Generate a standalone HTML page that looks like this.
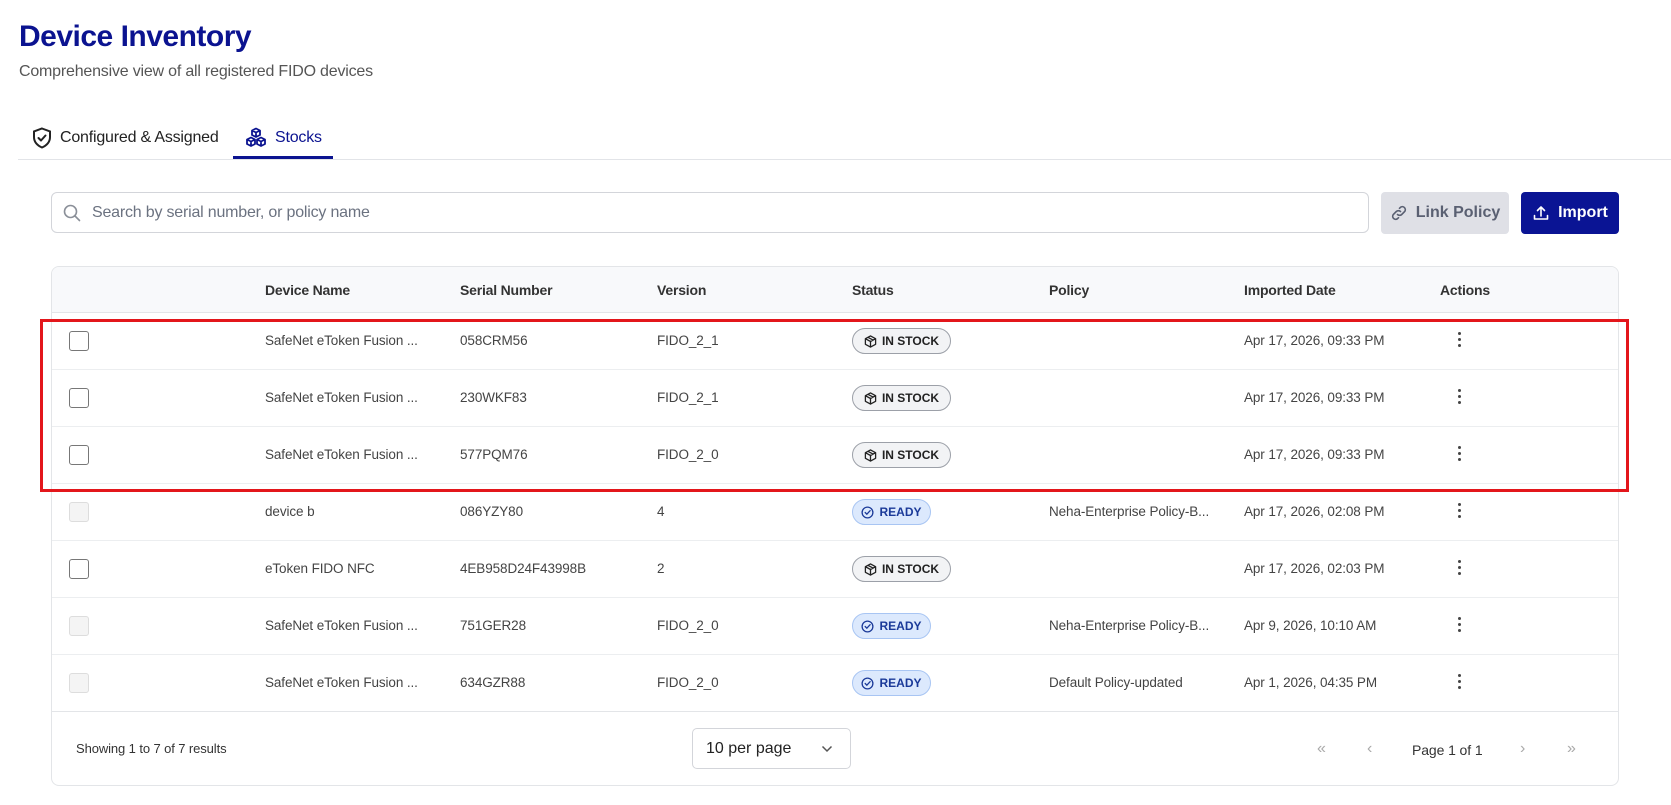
<!DOCTYPE html>
<html><head><meta charset="utf-8"><style>
*{box-sizing:border-box;margin:0;padding:0}
body{width:1671px;height:805px;background:#fff;font-family:"Liberation Sans",Arial,sans-serif;color:#333;position:relative;overflow:hidden}
.abs{position:absolute}
h1{position:absolute;left:19px;top:20px;font-size:30px;font-weight:bold;color:#0b1390;letter-spacing:-0.5px}
.sub{left:19px;top:63px;font-size:16px;color:#555;letter-spacing:-0.2px}
.tab{top:127px;font-size:16px;display:flex;align-items:center;gap:8px;color:#222;letter-spacing:-0.2px}
.search{left:51px;top:192px;width:1318px;height:41px;border:1px solid #d3d5da;border-radius:6px}
.search span{position:absolute;left:40px;top:11px;font-size:16px;color:#6b7280;letter-spacing:-0.2px}
.btn{top:192px;height:42px;border-radius:4px;display:flex;align-items:center;justify-content:center;gap:8px;font-size:16px;font-weight:bold}
.table{left:51px;top:266px;width:1568px;height:520px;border:1px solid #e3e5e8;border-radius:8px;overflow:hidden}
.head{position:absolute;left:0;top:0;width:100%;height:46px;background:#f8f9fb;border-bottom:1px solid #e3e5e8}
.hc{position:absolute;top:15px;font-size:14px;font-weight:bold;color:#333;letter-spacing:-0.2px}
.row{position:absolute;left:0;width:100%;height:57px;border-bottom:1px solid #eceef0}
.c{position:absolute;top:20px;font-size:13.5px;color:#444;white-space:nowrap;letter-spacing:-0.1px}
.cb{position:absolute;left:17px;top:18px;width:20px;height:20px;border:1.5px solid #777;border-radius:3px;background:#fff}
.cb.d{border:1px solid #ddd;background:#f4f4f4}
.badge{position:absolute;left:800px;top:15px;height:26px;border-radius:13px;display:flex;align-items:center;justify-content:center;gap:5px;font-size:12px;font-weight:bold;white-space:nowrap}
.stock{background:#f2f3f5;border:1.5px solid #9ca0a8;color:#222;width:99px}
.ready{background:#dce9fd;border:1.5px solid #a8c5f3;color:#1b3a99;width:79px}
.dots{position:absolute;left:1406px;top:19px;width:4px}
.dots i{display:block;width:3px;height:3px;background:#444;border-radius:50%;margin-bottom:3px}
</style></head><body>
<h1>Device Inventory</h1>
<div class="abs sub">Comprehensive view of all registered FIDO devices</div>
<div class="abs tab" style="left:32px"><svg width="20" height="22" viewBox="0 0 20 22" fill="none" stroke="#222" stroke-width="2"><path d="M10 1.5 L18 4.5 V10 C18 15 14.5 18.5 10 20.5 C5.5 18.5 2 15 2 10 V4.5 Z"/><path d="M6.5 11 L9 13.5 L13.5 8.5" stroke-linecap="round" stroke-linejoin="round"/></svg>Configured &amp; Assigned</div>
<div class="abs tab" style="left:245px;color:#0b1390"><svg width="22" height="22" viewBox="0 0 22 22" fill="none" stroke="#0b1390" stroke-width="1.8" stroke-linejoin="round"><path d="M11 1.5 L15 3.5 V8 L11 10 L7 8 V3.5Z M7 3.5 L11 5.5 L15 3.5 M11 5.5V10"/><path d="M6 10.5 L10 12.5 V17 L6 19 L2 17 V12.5Z M2 12.5 L6 14.5 L10 12.5 M6 14.5V19"/><path d="M16 10.5 L20 12.5 V17 L16 19 L12 17 V12.5Z M12 12.5 L16 14.5 L20 12.5 M16 14.5V19"/></svg>Stocks</div>
<div class="abs" style="left:233px;top:156px;width:100px;height:3px;background:#0b1390"></div>
<div class="abs" style="left:18px;top:159px;width:1653px;height:1px;background:#e2e4e8"></div>
<div class="abs search"><svg class="abs" style="left:11px;top:11px" width="18" height="18" viewBox="0 0 18 18" fill="none" stroke="#8a8f98" stroke-width="1.6"><circle cx="7.5" cy="7.5" r="6"/><path d="M12 12 L16.5 16.5" stroke-linecap="round"/></svg><span>Search by serial number, or policy name</span></div>
<div class="abs btn" style="left:1381px;width:128px;background:#dfe0e6;color:#5a6072"><svg width="18" height="18" viewBox="0 0 18 18" fill="none" stroke="#5a6072" stroke-width="1.6" stroke-linecap="round"><path d="M7.5 10.5 a3 3 0 0 0 4.2 0 l3-3 a3 3 0 0 0-4.2-4.2 l-1 1"/><path d="M10.5 7.5 a3 3 0 0 0-4.2 0 l-3 3 a3 3 0 0 0 4.2 4.2 l1-1"/></svg>Link Policy</div>
<div class="abs btn" style="left:1521px;width:98px;background:#0a1494;color:#fff"><svg width="18" height="18" viewBox="0 0 18 18" fill="none" stroke="#fff" stroke-width="1.6" stroke-linecap="round" stroke-linejoin="round"><path d="M9 12V3 M5.5 6.5 L9 3 L12.5 6.5 M2.5 11.5V15H15.5V11.5"/></svg>Import</div>

<div class="abs table">
<div class="head"><div class="hc" style="left:213px">Device Name</div><div class="hc" style="left:408px">Serial Number</div><div class="hc" style="left:605px">Version</div><div class="hc" style="left:800px">Status</div><div class="hc" style="left:997px">Policy</div><div class="hc" style="left:1192px">Imported Date</div><div class="hc" style="left:1388px">Actions</div></div>

<div class="row" style="top:46px"><div class="cb"></div><div class="c" style="left:213px">SafeNet eToken Fusion ...</div><div class="c" style="left:408px">058CRM56</div><div class="c" style="left:605px">FIDO_2_1</div><div class="badge stock"><svg width="13" height="13" viewBox="0 0 14 14" fill="none" stroke="#222" stroke-width="1.4" stroke-linejoin="round"><path d="M7 1 L12.5 4 V10 L7 13 L1.5 10 V4Z M1.5 4 L7 7 L12.5 4 M7 7V13 M4.2 2.5 L9.8 5.5"/></svg>IN STOCK</div><div class="c" style="left:1192px">Apr 17, 2026, 09:33 PM</div><div class="dots"><i></i><i></i><i></i></div></div>
<div class="row" style="top:103px"><div class="cb"></div><div class="c" style="left:213px">SafeNet eToken Fusion ...</div><div class="c" style="left:408px">230WKF83</div><div class="c" style="left:605px">FIDO_2_1</div><div class="badge stock"><svg width="13" height="13" viewBox="0 0 14 14" fill="none" stroke="#222" stroke-width="1.4" stroke-linejoin="round"><path d="M7 1 L12.5 4 V10 L7 13 L1.5 10 V4Z M1.5 4 L7 7 L12.5 4 M7 7V13 M4.2 2.5 L9.8 5.5"/></svg>IN STOCK</div><div class="c" style="left:1192px">Apr 17, 2026, 09:33 PM</div><div class="dots"><i></i><i></i><i></i></div></div>
<div class="row" style="top:160px"><div class="cb"></div><div class="c" style="left:213px">SafeNet eToken Fusion ...</div><div class="c" style="left:408px">577PQM76</div><div class="c" style="left:605px">FIDO_2_0</div><div class="badge stock"><svg width="13" height="13" viewBox="0 0 14 14" fill="none" stroke="#222" stroke-width="1.4" stroke-linejoin="round"><path d="M7 1 L12.5 4 V10 L7 13 L1.5 10 V4Z M1.5 4 L7 7 L12.5 4 M7 7V13 M4.2 2.5 L9.8 5.5"/></svg>IN STOCK</div><div class="c" style="left:1192px">Apr 17, 2026, 09:33 PM</div><div class="dots"><i></i><i></i><i></i></div></div>
<div class="row" style="top:217px"><div class="cb d"></div><div class="c" style="left:213px">device b</div><div class="c" style="left:408px">086YZY80</div><div class="c" style="left:605px">4</div><div class="badge ready"><svg width="13" height="13" viewBox="0 0 14 14" fill="none" stroke="#1b3a99" stroke-width="1.4" stroke-linecap="round"><circle cx="7" cy="7" r="5.8"/><path d="M4.5 7 L6.3 8.8 L9.8 5"/></svg>READY</div><div class="c" style="left:997px">Neha-Enterprise Policy-B...</div><div class="c" style="left:1192px">Apr 17, 2026, 02:08 PM</div><div class="dots"><i></i><i></i><i></i></div></div>
<div class="row" style="top:274px"><div class="cb"></div><div class="c" style="left:213px">eToken FIDO NFC</div><div class="c" style="left:408px">4EB958D24F43998B</div><div class="c" style="left:605px">2</div><div class="badge stock"><svg width="13" height="13" viewBox="0 0 14 14" fill="none" stroke="#222" stroke-width="1.4" stroke-linejoin="round"><path d="M7 1 L12.5 4 V10 L7 13 L1.5 10 V4Z M1.5 4 L7 7 L12.5 4 M7 7V13 M4.2 2.5 L9.8 5.5"/></svg>IN STOCK</div><div class="c" style="left:1192px">Apr 17, 2026, 02:03 PM</div><div class="dots"><i></i><i></i><i></i></div></div>
<div class="row" style="top:331px"><div class="cb d"></div><div class="c" style="left:213px">SafeNet eToken Fusion ...</div><div class="c" style="left:408px">751GER28</div><div class="c" style="left:605px">FIDO_2_0</div><div class="badge ready"><svg width="13" height="13" viewBox="0 0 14 14" fill="none" stroke="#1b3a99" stroke-width="1.4" stroke-linecap="round"><circle cx="7" cy="7" r="5.8"/><path d="M4.5 7 L6.3 8.8 L9.8 5"/></svg>READY</div><div class="c" style="left:997px">Neha-Enterprise Policy-B...</div><div class="c" style="left:1192px">Apr 9, 2026, 10:10 AM</div><div class="dots"><i></i><i></i><i></i></div></div>
<div class="row" style="top:388px;border-bottom:1px solid #e3e5e8"><div class="cb d"></div><div class="c" style="left:213px">SafeNet eToken Fusion ...</div><div class="c" style="left:408px">634GZR88</div><div class="c" style="left:605px">FIDO_2_0</div><div class="badge ready"><svg width="13" height="13" viewBox="0 0 14 14" fill="none" stroke="#1b3a99" stroke-width="1.4" stroke-linecap="round"><circle cx="7" cy="7" r="5.8"/><path d="M4.5 7 L6.3 8.8 L9.8 5"/></svg>READY</div><div class="c" style="left:997px">Default Policy-updated</div><div class="c" style="left:1192px">Apr 1, 2026, 04:35 PM</div><div class="dots"><i></i><i></i><i></i></div></div>

<div class="c" style="left:24px;top:474px;font-size:13px;color:#333">Showing 1 to 7 of 7 results</div>
<div class="abs" style="left:640px;top:461px;width:159px;height:41px;border:1px solid #d3d5da;border-radius:5px"><span class="abs" style="left:13px;top:11px;font-size:16px;color:#222">10 per page</span><svg class="abs" style="left:128px;top:15px" width="12" height="10" viewBox="0 0 12 10" fill="none" stroke="#555" stroke-width="1.5"><path d="M1.5 2.5 L6 7 L10.5 2.5"/></svg></div>
<div class="c" style="left:1265px;top:473px;color:#aaa;font-size:16px">«</div>
<div class="c" style="left:1315px;top:473px;color:#aaa;font-size:16px">‹</div>
<div class="c" style="left:1360px;top:475px;font-size:14px;color:#333">Page 1 of 1</div>
<div class="c" style="left:1468px;top:473px;color:#aaa;font-size:16px">›</div>
<div class="c" style="left:1515px;top:473px;color:#aaa;font-size:16px">»</div>
</div>
<div class="abs" style="left:40px;top:319px;width:1589px;height:173px;border:3px solid #e3161b"></div>
</body></html>
